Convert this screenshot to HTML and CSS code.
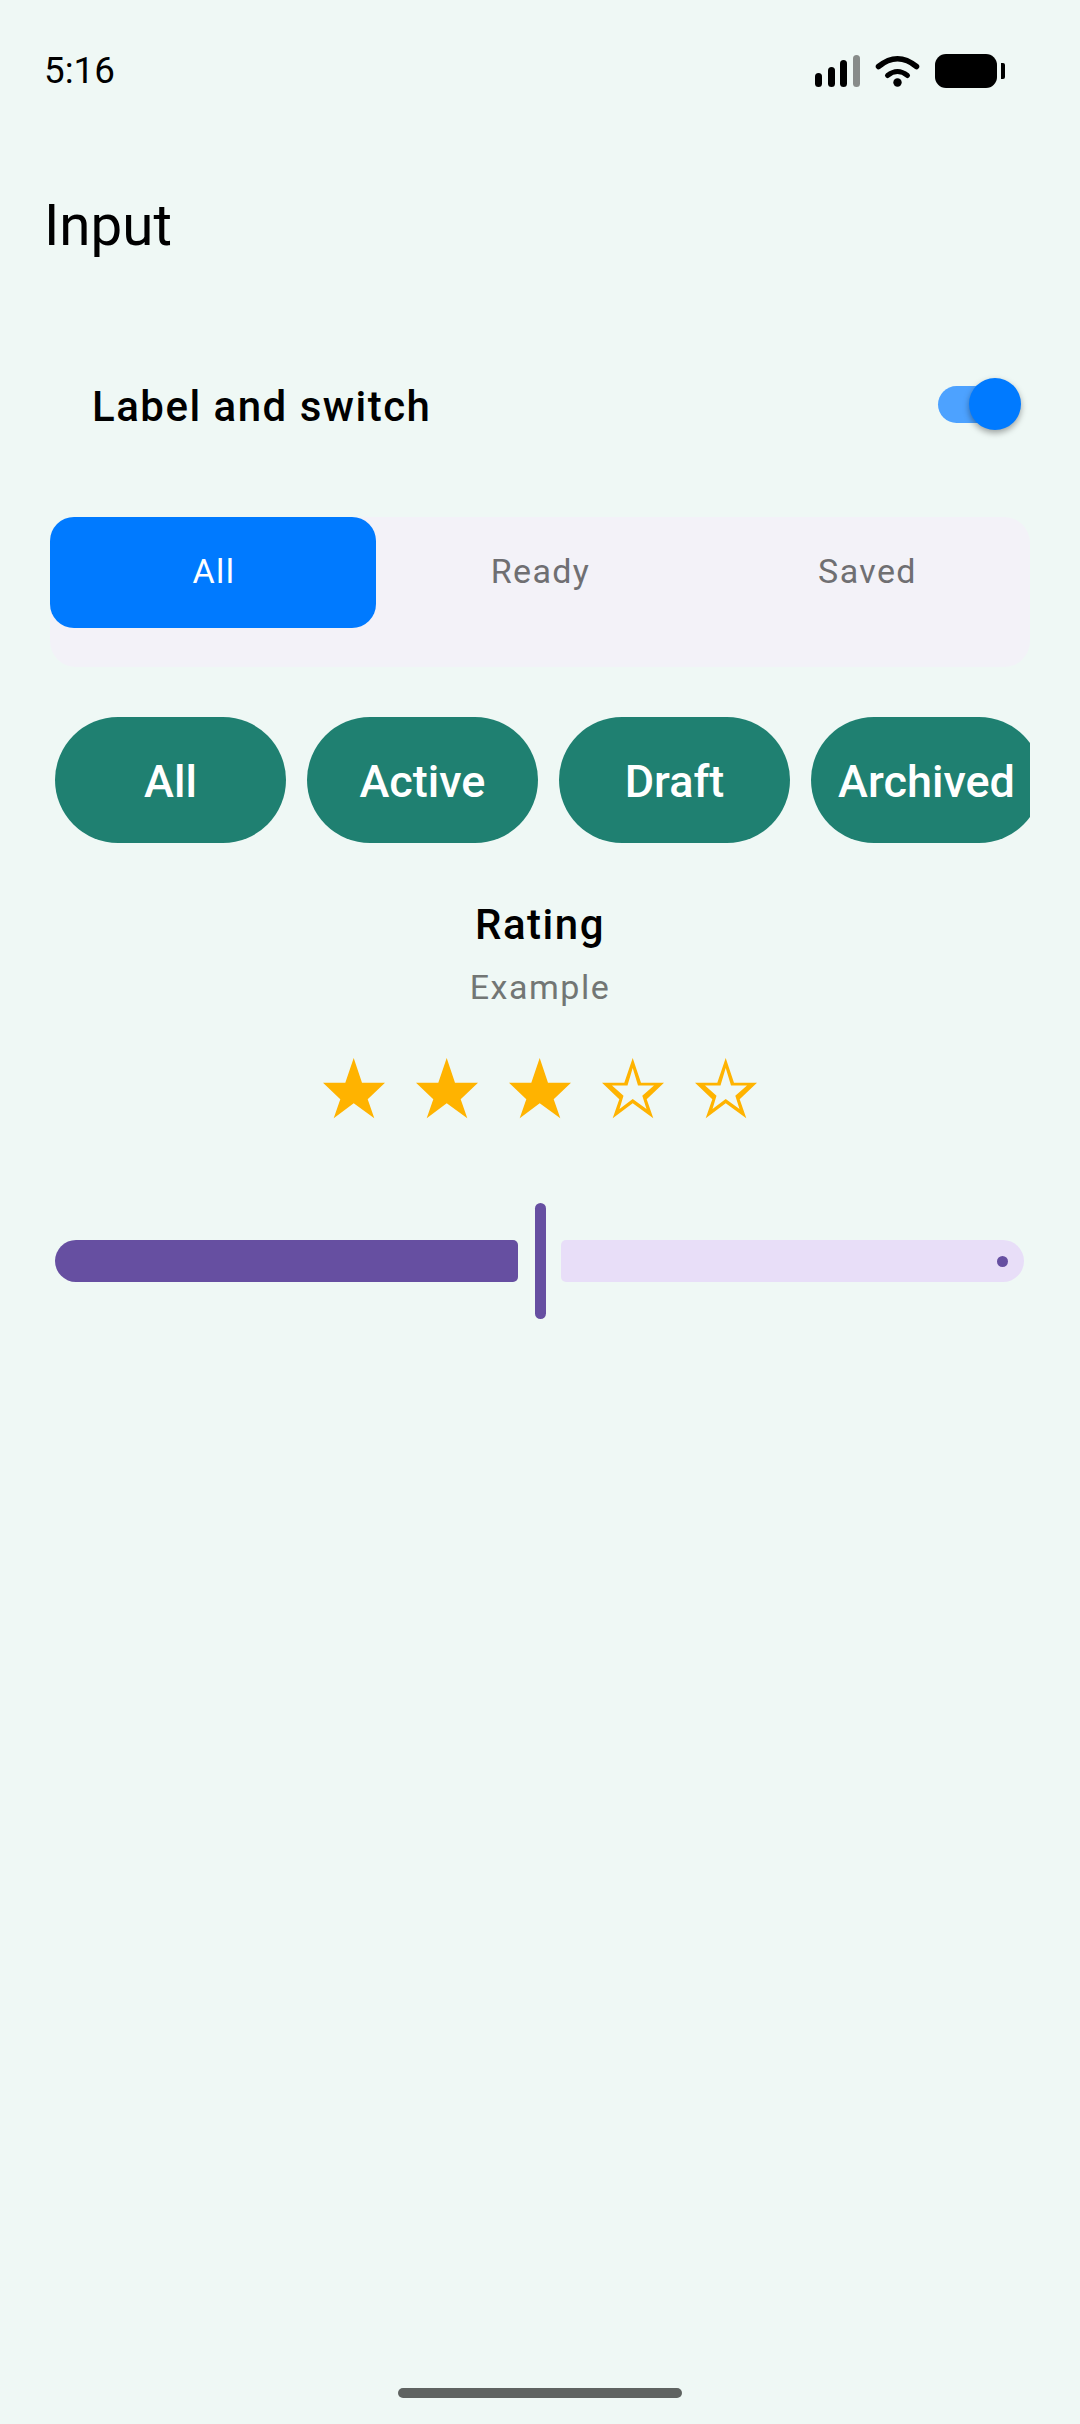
FILE: index.html
```html
<!DOCTYPE html>
<html lang="en">
<head>
<meta charset="utf-8">
<title>Input</title>
<link rel="stylesheet" href="styles.css">
</head>
<body>
<main class="page">
  <header class="status">
    <span class="time">5:16</span>
    <svg class="status-icons" width="190" height="34" viewBox="0 0 190 34">
      <rect x="0" y="19" width="7" height="14" rx="3.5" fill="#000"/>
      <rect x="13" y="13" width="7" height="20" rx="3.5" fill="#000"/>
      <rect x="25" y="6" width="7" height="27" rx="3.5" fill="#000"/>
      <rect x="38" y="1" width="7" height="32" rx="3.5" fill="#888c8a"/>
      <path d="M63.5 12.5 Q82.5 -3 101.5 12.5" fill="none" stroke="#000" stroke-width="5.5" stroke-linecap="round"/>
      <path d="M72.5 21.5 Q82.5 13.5 92.5 21.5" fill="none" stroke="#000" stroke-width="5" stroke-linecap="round"/>
      <circle cx="82.5" cy="28.5" r="4.2" fill="#000"/>
      <rect x="120" y="0" width="62" height="34" rx="11" fill="#000"/>
      <path d="M186 9 L188 9 Q190 9 190 11 L190 23 Q190 25 188 25 L186 25 Z" fill="#000"/>
    </svg>
  </header>
  <h1 class="title">Input</h1>
  <section class="switch-row">
    <span class="switch-label">Label and switch</span>
    <span class="switch">
      <span class="switch-track"></span>
      <span class="switch-thumb"></span>
    </span>
  </section>
  <nav class="segments">
    <span class="segment segment-on">All</span>
    <span class="segment">Ready</span>
    <span class="segment">Saved</span>
  </nav>
  <div class="chips">
    <span class="chip">All</span>
    <span class="chip">Active</span>
    <span class="chip">Draft</span>
    <span class="chip">Archived</span>
  </div>
  <section class="rating">
    <h2 class="rating-title">Rating</h2>
    <p class="rating-sub">Example</p>
    <div class="stars">
      <svg class="star" width="62" height="61" viewBox="0 0 62 61"><polygon class="star-fill" points="30.7,0 39,24.7 62,24.7 44.7,41.3 51.3,60.3 30.7,45.3 10.7,60.3 17.3,41.3 0,24.7 22.3,24.7"/></svg>
      <svg class="star" width="62" height="61" viewBox="0 0 62 61"><polygon class="star-fill" points="30.7,0 39,24.7 62,24.7 44.7,41.3 51.3,60.3 30.7,45.3 10.7,60.3 17.3,41.3 0,24.7 22.3,24.7"/></svg>
      <svg class="star" width="62" height="61" viewBox="0 0 62 61"><polygon class="star-fill" points="30.7,0 39,24.7 62,24.7 44.7,41.3 51.3,60.3 30.7,45.3 10.7,60.3 17.3,41.3 0,24.7 22.3,24.7"/></svg>
      <svg class="star" width="62" height="61" viewBox="0 0 62 61"><path class="star-line" fill-rule="evenodd" d="M30.7 0L39 24.7H62L44.7 41.3L51.3 60.3L30.7 45.3L10.7 60.3L17.3 41.3L0 24.7H22.3Z M30.7 10L25.5 27.5H10L21.5 37.8L17.5 51L30.7 41L44.5 51L40.3 37.8L52 27.5H36Z"/></svg>
      <svg class="star" width="62" height="61" viewBox="0 0 62 61"><path class="star-line" fill-rule="evenodd" d="M30.7 0L39 24.7H62L44.7 41.3L51.3 60.3L30.7 45.3L10.7 60.3L17.3 41.3L0 24.7H22.3Z M30.7 10L25.5 27.5H10L21.5 37.8L17.5 51L30.7 41L44.5 51L40.3 37.8L52 27.5H36Z"/></svg>
    </div>
  </section>
  <div class="slider">
    <span class="slider-active"></span>
    <span class="slider-handle"></span>
    <span class="slider-rest"><span class="slider-dot"></span></span>
  </div>
  <div class="home-bar"></div>
</main>
</body>
</html>
```
FILE: styles.css
```css
* { box-sizing: border-box; }
html, body { margin: 0; padding: 0; }
body { background: #eff8f5; font-family: Roboto, "Noto Sans", sans-serif; }
.page { min-height: 2424px; display: flex; flex-direction: column; }

.status { display: flex; justify-content: space-between; align-items: center; padding: 54px 75px 0 44px; height: 88px; }
.time { font-size: 36.75px; line-height: 34px; color: #000; }
.status-icons { display: block; }

.title { margin: 102px 0 0 44px; font-size: 56.5px; line-height: 72px; font-weight: 400; color: #000; }

.switch-row { display: flex; justify-content: space-between; align-items: center; height: 52px; margin-top: 116px; padding: 0 59px 0 92px; }
.switch-label { margin-top: 4px; font-size: 42px; font-weight: 500; letter-spacing: 1.5px; color: #000; }
.switch { position: relative; display: block; width: 83px; height: 52px; }
.switch-track { position: absolute; left: 0; right: 5px; top: 8px; height: 37px; border-radius: 19px; background: #4da2ff; }
.switch-thumb { position: absolute; right: 0; top: 0; width: 52px; height: 52px; border-radius: 50%; background: #007aff; box-shadow: 0 3px 6px rgba(0,0,0,.35); }

.segments { display: flex; align-items: flex-start; margin: 87px 50px 0; height: 150px; background: #f3f2f8; border-radius: 26px; }
.segment { flex: 1; height: 111px; display: flex; align-items: center; justify-content: center; padding: 0 0 3px 2px; border-radius: 24px; font-size: 34px; letter-spacing: 1.4px; color: #6f6f72; }
.segment-on { flex: none; width: 326px; background: #007aff; color: #fff; }

.chips { display: flex; gap: 21px; margin: 50px 50px 0; padding-left: 5px; overflow: hidden; }
.chip { flex: none; width: 231px; height: 126px; display: flex; align-items: center; justify-content: center; padding-top: 2px; border-radius: 63px; background: #1f8071; color: #fff; font-size: 45px; font-weight: 500; }

.rating { display: flex; flex-direction: column; align-items: center; margin-top: 54px; }
.rating-title { margin: 0; font-size: 42px; line-height: 56px; font-weight: 500; letter-spacing: 1.5px; color: #000; }
.rating-sub { margin: 8px 0 0; font-size: 34px; line-height: 52px; letter-spacing: 1.5px; color: #727674; }
.stars { display: flex; gap: 31px; margin-top: 45px; }
.star { display: block; }
.star-fill, .star-line { fill: #ffb300; }

.slider { display: flex; align-items: center; height: 116px; margin: 84px 0 0 55px; }
.slider-active { width: 463px; height: 42px; background: #664fa1; border-radius: 21px 5px 5px 21px; }
.slider-handle { width: 11px; height: 116px; margin: 0 15px 0 17px; background: #664fa1; border-radius: 6px; }
.slider-rest { width: 463px; height: 42px; display: flex; align-items: center; justify-content: flex-end; padding-right: 16px; background: #e8def8; border-radius: 5px 21px 21px 5px; }
.slider-dot { width: 11px; height: 11px; border-radius: 50%; background: #664fa1; }

.home-bar { width: 284px; height: 10px; margin: auto auto 26px; border-radius: 5px; background: #5f6361; }
```
